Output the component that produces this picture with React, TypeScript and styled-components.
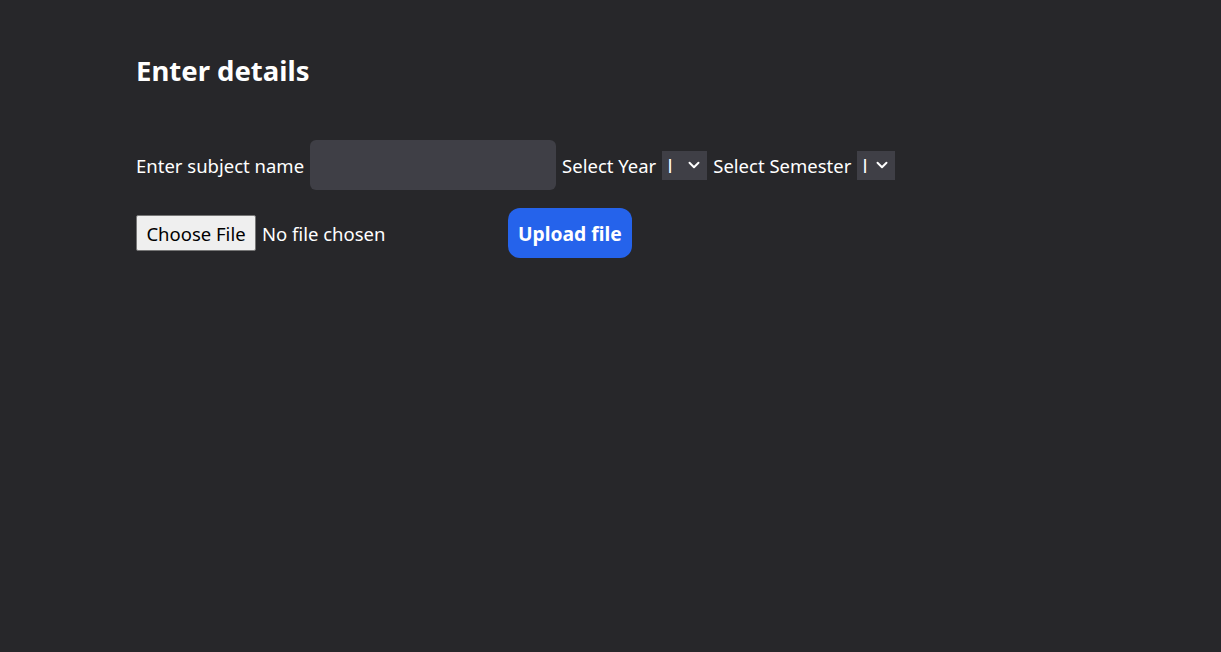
import * as React from "react";
import styled, { createGlobalStyle } from "styled-components";
import { ChevronDown } from "lucide-react";

const GlobalStyle = createGlobalStyle`
  html, body {
    margin: 0;
    padding: 0;
    background: #27272a;
    color: #ffffff;
    font-family: "Noto Sans", "Open Sans", sans-serif;
  }
`;

const Page = styled.div`
  min-height: 652px;
  padding: 55px 136px 0;
  box-sizing: border-box;
`;

const Heading = styled.h1`
  margin: 0 0 53px;
  font-size: 27.5px;
  line-height: 32px;
  font-weight: 700;
`;

const Row = styled.div<{ $gap?: number }>`
  display: flex;
  align-items: center;
  gap: ${(p) => p.$gap ?? 6}px;
  font-size: 18.5px;
`;

const Form = styled.form`
  display: flex;
  flex-direction: column;
  gap: 18px;
`;

const TextInput = styled.input`
  width: 246px;
  height: 50px;
  box-sizing: border-box;
  border: 0;
  border-radius: 6px;
  background: #3f3f46;
  color: #fff;
  font-family: "Noto Sans", sans-serif;
  font-size: 18px;
  padding: 0 12px;
  outline: none;
`;

const SelectWrap = styled.span`
  position: relative;
  display: inline-flex;

  svg {
    position: absolute;
    right: 4px;
    top: 5px;
    pointer-events: none;
    color: #fff;
  }
`;

const Select = styled.select<{ $width: number }>`
  appearance: none;
  width: ${(p) => p.$width}px;
  height: 29px;
  border: 0;
  border-radius: 0;
  background: #3f3f46;
  color: #fff;
  font-family: "Open Sans", "Liberation Sans", sans-serif;
  font-size: 20px;
  padding: 0 0 0 5px;
  outline: none;
`;

const FilePicker = styled.label`
  display: flex;
  align-items: center;
  gap: 6px;
  width: 366px;
  cursor: pointer;

  input {
    display: none;
  }
`;

const FileButton = styled.span`
  display: inline-flex;
  align-items: center;
  justify-content: center;
  width: 120px;
  height: 36px;
  box-sizing: border-box;
  background: #efefef;
  border: 1px solid #767676;
  border-radius: 2px;
  color: #000;
  font-size: 18.5px;
`;

const UploadButton = styled.button`
  height: 50px;
  padding: 0 10px;
  border: 0;
  border-radius: 12px;
  background: #2563eb;
  color: #fff;
  font-family: "Noto Sans", sans-serif;
  font-size: 19.3px;
  font-weight: 700;
  cursor: pointer;
`;

const App = () => {
  const [fileName, setFileName] = React.useState("");

  return (
    <Page>
      <GlobalStyle />
      <Heading>Enter details</Heading>
      <Form onSubmit={(e) => e.preventDefault()}>
        <Row>
          <span>Enter subject name</span>
          <TextInput type="text" />
          <span>Select Year</span>
          <SelectWrap>
            <Select $width={45}>
              <option>I</option>
              <option>II</option>
              <option>III</option>
              <option>IV</option>
            </Select>
            <ChevronDown size={18} strokeWidth={2.6} />
          </SelectWrap>
          <span>Select Semester</span>
          <SelectWrap>
            <Select $width={38}>
              <option>I</option>
              <option>II</option>
            </Select>
            <ChevronDown size={18} strokeWidth={2.6} />
          </SelectWrap>
        </Row>
        <Row $gap={6}>
          <FilePicker>
            <input
              type="file"
              onChange={(e) => setFileName(e.target.files?.[0]?.name ?? "")}
            />
            <FileButton>Choose File</FileButton>
            <span>{fileName || "No file chosen"}</span>
          </FilePicker>
          <UploadButton type="submit">Upload file</UploadButton>
        </Row>
      </Form>
    </Page>
  );
};

export default App;
